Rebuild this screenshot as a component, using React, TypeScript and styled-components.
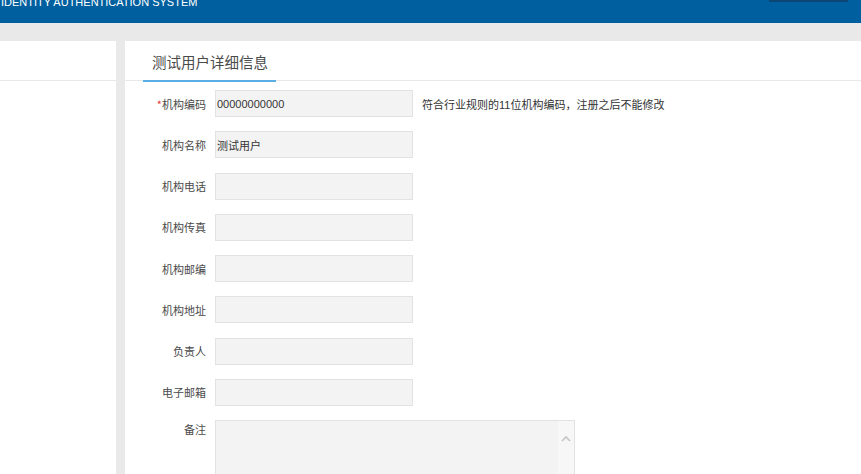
import styled, { createGlobalStyle } from "styled-components";

const Global = createGlobalStyle`
  html, body {
    margin: 0;
    padding: 0;
    background: #e9e9e9;
    overflow: hidden;
    font-family: "Liberation Sans", "Noto Sans CJK SC", sans-serif;
  }
  * { box-sizing: border-box; }
`

const Header = styled.div`
  height: 23px;
  background: #005f9e;
  display: flex;
  justify-content: space-between;
  align-items: flex-start;
  padding-left: 1px;
  overflow: hidden;
`

const Brand = styled.div`
  margin-top: -3px;
  font-size: 11px;
  line-height: 11px;
  color: #ffffff;
  white-space: nowrap;
`

const HeadBtn = styled.div`
  width: 79px;
  height: 2px;
  margin-right: 13px;
  background: #0b4675;
`

const Main = styled.div`
  margin-top: 18px;
  display: flex;
  gap: 9px;
  height: 433px;
`

const Side = styled.div`
  width: 116px;
  background: #fff;
  .top{
    height: 40px;
    border-bottom: 1px solid #e8e8e8;
  }
`

const Panel = styled.div`
  flex: 1;
  background: #fff;
`

const TabBar = styled.div`
  height: 40px;
  border-bottom: 1px solid #e8e8e8;
  padding-left: 18px;
  display: flex;
`

const Tab = styled.div`
  height: 41px;
  padding: 1px 8px 0 9px;
  display: flex;
  align-items: center;
  font-family: "Noto Sans CJK SC", sans-serif;
  font-size: 14.5px;
  color: #4a4a4a;
  border-bottom: 2px solid #5aaee6;
`

const Form = styled.div`
  padding-top: 9px;
  display: flex;
  flex-direction: column;
  gap: 14.25px;
`

const Row = styled.div<{ $top?: boolean }>`
  display: flex;
  align-items: ${p => (p.$top ? "flex-start" : "center")};
  gap: 9px;
`

const Label = styled.div<{ $top?: boolean }>`
  width: 81px;
  text-align: right;
  font-family: "Noto Sans CJK SC", sans-serif;
  font-size: 11px;
  color: #4a4a4a;
  padding-top: ${p => (p.$top ? "1px" : "0")};
  span{
    color: #e4393c;
  }
`

const Input = styled.div`
  width: 198px;
  height: 27px;
  background: #f3f3f3;
  border: 1px solid #e2e2e2;
  padding-left: 1px;
  display: flex;
  align-items: center;
  font-family: "Liberation Sans", "Noto Sans CJK SC", sans-serif;
  font-size: 11px;
  color: #333;
`

const Hint = styled.div`
  font-family: "Liberation Sans", "Noto Sans CJK SC", sans-serif;
  font-size: 11px;
  color: #333;
`

const AreaBox = styled.div`
  width: 360px;
  height: 90px;
  background: #f3f3f3;
  border: 1px solid #e2e2e2;
  display: flex;
`

const Area = styled.div`
  flex: 1;
`

const Track = styled.div`
  width: 16px;
  background: #f7f7f7;
  display: flex;
  justify-content: center;
  padding-top: 14px;
`

const fields = [
  { label: "机构编码", value: "00000000000", req: true, hint: "符合行业规则的11位机构编码，注册之后不能修改" },
  { label: "机构名称", value: "测试用户" },
  { label: "机构电话", value: "" },
  { label: "机构传真", value: "" },
  { label: "机构邮编", value: "" },
  { label: "机构地址", value: "" },
  { label: "负责人", value: "" },
  { label: "电子邮箱", value: "" },
]

export default function App() {
  return <>
    <Global />
    <Header>
      <Brand>IDENTITY AUTHENTICATION SYSTEM</Brand>
      <HeadBtn />
    </Header>
    <Main>
      <Side><div className="top" /></Side>
      <Panel>
        <TabBar>
          <Tab>测试用户详细信息</Tab>
        </TabBar>
        <Form>
          {fields.map((f) => (
            <Row key={f.label}>
              <Label>{f.req && <span>*</span>}{f.label}</Label>
              <Input>{f.value}</Input>
              {f.hint && <Hint>{f.hint}</Hint>}
            </Row>
          ))}
          <Row $top>
            <Label $top>备注</Label>
            <AreaBox>
              <Area />
              <Track>
                <svg width="10" height="7" viewBox="0 0 10 7">
                  <path d="M1 6 L5 2 L9 6" fill="none" stroke="#c4c4c4" strokeWidth="1.6" />
                </svg>
              </Track>
            </AreaBox>
          </Row>
        </Form>
      </Panel>
    </Main>
  </>
}
